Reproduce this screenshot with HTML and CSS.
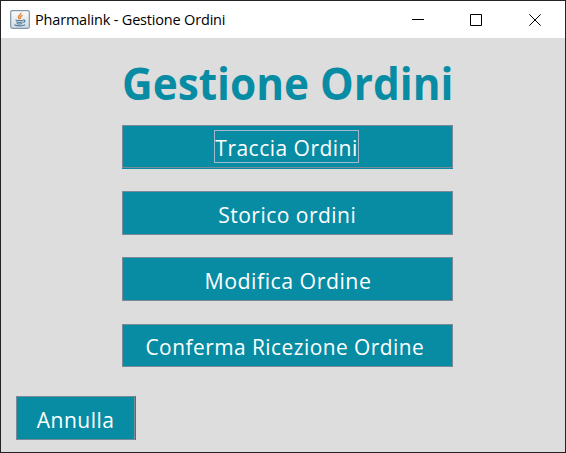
FILE: index.html
```html
<!DOCTYPE html>
<html lang="it">
<head>
<meta charset="utf-8">
<title>Pharmalink - Gestione Ordini</title>
<link rel="stylesheet" href="styles.css">
</head>
<body>
<div class="window">
  <header class="titlebar">
    <svg class="app-icon" width="20" height="19" viewBox="0 0 20 19">
      <defs><linearGradient id="tile" x2="0" y2="1"><stop stop-color="#fbfcfc"/><stop offset="1" stop-color="#d2dbe2"/></linearGradient></defs>
      <rect x=".7" y=".7" width="18.6" height="17.6" rx="1.5" fill="url(#tile)" stroke="#8297a8" stroke-width="1.2"/>
      <path d="M10.8 2.8c.8 2.2-3.5 3-2.3 5.1l1 1.4M12.6 5.4c-2.5 1-2.6 2-1.7 3.3" fill="none" stroke="#e58b42" stroke-width="1.5"/>
      <path d="M5.5 10c2 .7 5.5.7 7.7 0M6 11.8c2 .8 4.8.8 6.8 0M6.7 13.5c1.6.6 3.800.6 5.400 0M13 10.100c2.500-.7 2.500 1.800.3 2.500M4.400 14.800c2.500 1.500 8.500 1.400 10.800 0" fill="none" stroke="#567f9f" stroke-width="1.2"/>
    </svg>
    <span class="caption">Pharmalink - Gestione Ordini</span>
    <div class="controls">
      <svg width="12" height="12" viewBox="0 0 12 12"><path d="M0 5.5h12"/></svg>
      <svg width="12" height="12" viewBox="0 0 12 12"><path d="M.5.5h11v11H.5z"/></svg>
      <svg class="close" width="12" height="12" viewBox="0 0 12 12"><path d="M.3.3l11.4 11.4M11.7.3L.3 11.7"/></svg>
    </div>
  </header>
  <main class="content">
    <h1 class="heading">Gestione Ordini</h1>
    <nav class="menu">
      <button class="btn btn-track"><span class="focus"><span class="label">Traccia Ordini</span></span></button>
      <button class="btn btn-history"><span class="label">Storico ordini</span></button>
      <button class="btn btn-edit"><span class="label">Modifica Ordine</span></button>
      <button class="btn btn-confirm"><span class="label">Conferma Ricezione Ordine</span></button>
    </nav>
    <button class="btn btn-cancel"><span class="label">Annulla</span></button>
  </main>
</div>
</body>
</html>
```
FILE: styles.css
```css
* { box-sizing: border-box; }
body { margin: 0; font-family: "Open Sans", "Noto Sans", sans-serif; }
.window { width: 566px; height: 453px; border: 1px solid #242224; background: #ddd; overflow: hidden; }
.titlebar { display: flex; align-items: center; height: 37px; padding: 0 24px 0 9px; background: #fff; }
.app-icon { flex: none; }
.caption { margin-left: 5px; font-size: 14.5px; letter-spacing: -0.18px; line-height: 37px; color: #000; white-space: nowrap; }
.controls { display: flex; gap: 46px; margin-left: auto; }
.controls svg { fill: none; stroke: #000; stroke-width: 1; }
.controls .close { margin-left: 1px; }
.content { display: flex; flex-direction: column; height: 414px; }
.heading { margin: 15px 0 0 121px; height: 72px; font-size: 44px; line-height: 60px; font-weight: 700; color: #078ca4; white-space: nowrap; transform: scaleX(0.962); transform-origin: left; }
.menu { display: grid; grid-template-rows: 44px 44px 44px 43px; row-gap: 22px; width: 331px; margin-left: 121px; }
.btn { display: flex; align-items: center; justify-content: center; padding: 1px 0 0; border: 1px solid #7a8a99; border-radius: 0; background: #078ca4; color: #fff; font: 22px/30px "Open Sans", "Noto Sans", sans-serif; letter-spacing: 0.5px; white-space: nowrap; }
.label { transform: scaleX(0.955); }
.btn-track { height: 43px; padding: 0 2px 0 0; box-shadow: 0 1px #078ca4; }
.focus { display: flex; justify-content: center; width: 145px; height: 33px; border: 1px solid #a3b8cc; line-height: 32px; }
.btn-edit .label { transform: scaleX(0.97); }
.btn-confirm { margin-top: 1px; height: 43px; padding-right: 5px; }
.btn-confirm .label { transform: scaleX(0.949); }
.btn-cancel { width: 119px; height: 44px; margin: 30px 0 0 15px; box-shadow: 1px 0 #078ca4; }
```
